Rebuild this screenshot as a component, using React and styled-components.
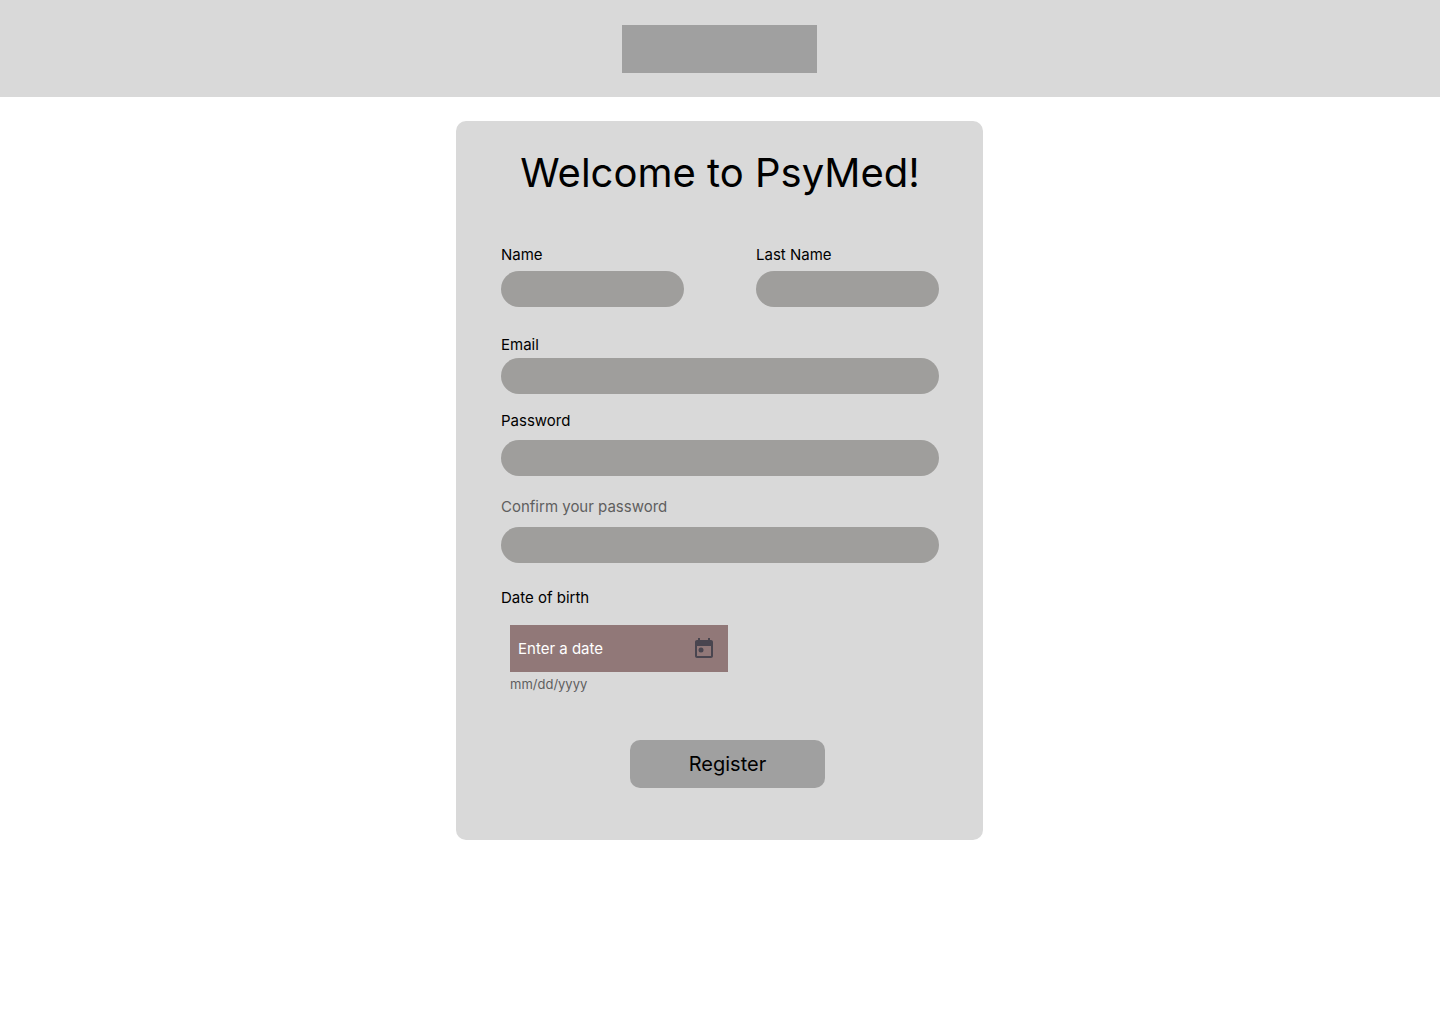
import React from "react";
import styled, { createGlobalStyle } from "styled-components";

const GlobalStyle = createGlobalStyle`
  *, *::before, *::after { box-sizing: border-box; }
  body {
    margin: 0;
    background: #ffffff;
    color: #000000;
    font-family: Inter, "Liberation Sans", sans-serif;
  }
`;

const Header = styled.header`
  display: flex;
  justify-content: center;
  padding: 25px 25px 24px 24px;
  background: #d9d9d9;
`;

const LogoPlaceholder = styled.div`
  width: 195px;
  height: 48px;
  background: #a0a0a0;
`;

const Main = styled.main`
  display: flex;
  justify-content: center;
  padding: 24px 25px 24px 24px;
`;

const Card = styled.form`
  display: flex;
  flex-direction: column;
  width: 100%;
  max-width: 527px;
  padding: 28px 44px 52px 45px;
  border-radius: 10px;
  background: #d9d9d9;
`;

const Title = styled.h1`
  margin: 0 0 48px;
  font-size: 40px;
  line-height: 48px;
  font-weight: 400;
  text-align: center;
  white-space: nowrap;
`;

const NameRow = styled.div`
  display: grid;
  grid-template-columns: 1fr 1fr;
  gap: 72px;
  margin-bottom: 28px;
`;

const Field = styled.div`
  display: flex;
  flex-direction: column;
  gap: ${(p) => p.$gap || 6}px;
  margin-bottom: ${(p) => p.$after || 0}px;
`;

const Label = styled.label`
  font-size: 15px;
  line-height: 20px;
  color: ${(p) => (p.$muted ? "#5f5f5f" : "#000000")};
`;

const TextInput = styled.input`
  width: 100%;
  height: 36px;
  padding: 0 16px;
  border: 0;
  border-radius: 18px;
  background: #9f9e9c;
  font: inherit;
  font-size: 15px;
`;

const DateGroup = styled.div`
  display: flex;
  flex-direction: column;
  gap: 2px;
  width: 218px;
  margin: 0 0 46px 9px;
`;

const DateBox = styled.div`
  display: flex;
  align-items: center;
  height: 47px;
  padding: 0 12px 1px 8px;
  background: #917878;
`;

const DateInput = styled.input`
  flex: 1;
  min-width: 0;
  height: 24px;
  padding: 0;
  border: 0;
  background: transparent;
  color: #ffffff;
  font: inherit;
  font-size: 15px;
  line-height: 20px;

  &::placeholder {
    color: #ffffff;
    opacity: 1;
  }
`;

const CalendarButton = styled.button`
  display: flex;
  padding: 0;
  border: 0;
  background: transparent;
  color: #49454f;
  cursor: pointer;
`;

const Hint = styled.span`
  font-size: 13px;
  line-height: 20px;
  color: #5f5f5f;
`;

const RegisterButton = styled.button`
  align-self: center;
  width: 195px;
  height: 48px;
  margin-left: 15px;
  padding: 0;
  border: 0;
  border-radius: 10px;
  background: #a0a0a0;
  color: #000000;
  font: inherit;
  font-size: 20px;
  line-height: 24px;
  cursor: pointer;
`;

function CalendarIcon() {
  return (
    <svg width="24" height="24" viewBox="0 0 24 24" fill="currentColor" aria-hidden="true">
      <path d="M19 4h-1V2h-2v2H8V2H6v2H5c-1.1 0-2 .9-2 2v14c0 1.1.9 2 2 2h14c1.1 0 2-.9 2-2V6c0-1.1-.9-2-2-2Zm0 16H5V10h14v10Z" />
      <circle cx="9" cy="14" r="2.5" />
    </svg>
  );
}

function TextField({ id, label, type = "text", muted, gap, after }) {
  return (
    <Field $gap={gap} $after={after}>
      <Label htmlFor={id} $muted={muted}>{label}</Label>
      <TextInput id={id} name={id} type={type} />
    </Field>
  );
}

export default function App() {
  return (
    <>
      <GlobalStyle />
      <Header>
        <LogoPlaceholder />
      </Header>
      <Main>
        <Card onSubmit={(e) => e.preventDefault()}>
          <Title>Welcome to PsyMed!</Title>
          <NameRow>
            <TextField id="name" label="Name" />
            <TextField id="lastName" label="Last Name" />
          </NameRow>
          <TextField id="email" label="Email" gap={3} after={17} />
          <TextField id="password" label="Password" type="password" gap={9} after={21} />
          <TextField id="confirm" label="Confirm your password" type="password" muted gap={10} after={25} />
          <Field $gap={17}>
            <Label htmlFor="birth">Date of birth</Label>
            <DateGroup>
              <DateBox>
                <DateInput id="birth" name="birth" type="text" placeholder="Enter a date" aria-describedby="birth-hint" />
                <CalendarButton type="button" aria-label="Choose a date">
                  <CalendarIcon />
                </CalendarButton>
              </DateBox>
              <Hint id="birth-hint">mm/dd/yyyy</Hint>
            </DateGroup>
          </Field>
          <RegisterButton type="submit">Register</RegisterButton>
        </Card>
      </Main>
    </>
  );
}
